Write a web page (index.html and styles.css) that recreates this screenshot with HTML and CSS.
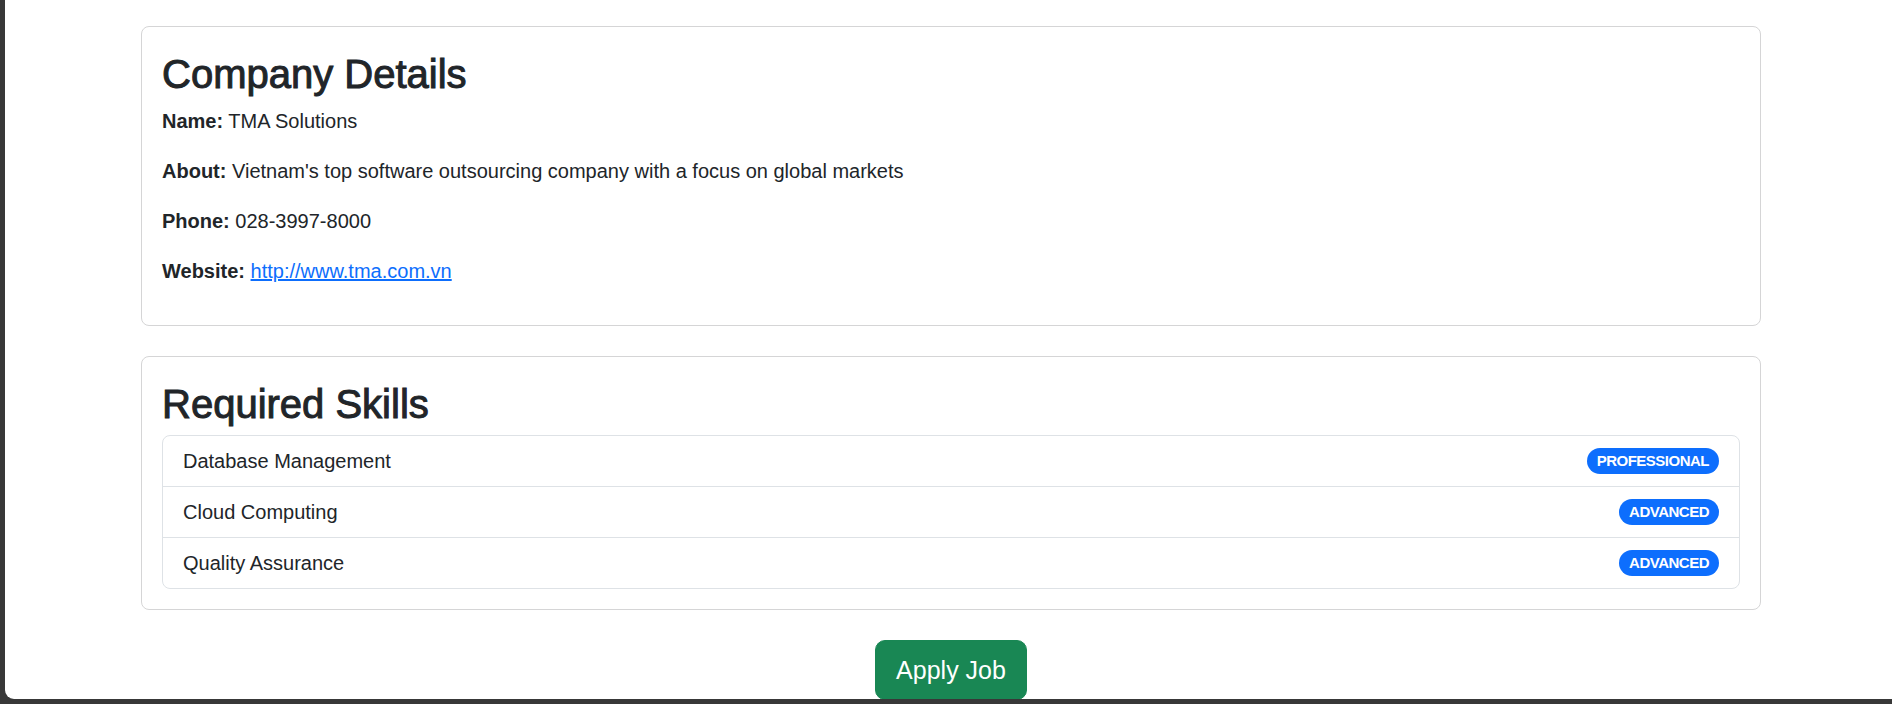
FILE: index.html
```html
<!DOCTYPE html>
<html lang="en">
<head>
<meta charset="utf-8">
<title>Job Details</title>
<link rel="stylesheet" href="styles.css">
</head>
<body>
<div class="window">
  <main class="container">
    <section class="card">
      <div class="card-body">
        <h2 class="card-title">Company Details</h2>
        <p><strong>Name:</strong> TMA Solutions</p>
        <p><strong>About:</strong> Vietnam's top software outsourcing company with a focus on global markets</p>
        <p><strong>Phone:</strong> 028-3997-8000</p>
        <p><strong>Website:</strong> <a href="#">http://www.tma.com.vn</a></p>
      </div>
    </section>
    <section class="card">
      <div class="card-body">
        <h2 class="card-title">Required Skills</h2>
        <ul class="list-group">
          <li class="list-item"><span>Database Management</span><span class="badge">Professional</span></li>
          <li class="list-item"><span>Cloud Computing</span><span class="badge">Advanced</span></li>
          <li class="list-item"><span>Quality Assurance</span><span class="badge">Advanced</span></li>
        </ul>
      </div>
    </section>
    <div class="actions">
      <button class="btn-apply" type="button">Apply Job</button>
    </div>
  </main>
</div>
</body>
</html>
```

FILE: styles.css
```css
* { box-sizing: border-box; }

html, body {
  margin: 0;
  padding: 0;
  height: 704px;
  overflow: hidden;
}

body {
  background: #383838;
  font-family: "Liberation Sans", Arial, sans-serif;
  font-size: 20px;
  line-height: 1.5;
  color: #212529;
}

.window {
  margin-left: 5px;
  height: 699px;
  background: #ffffff;
  border-bottom-left-radius: 9px;
  overflow: hidden;
  padding: 26px 0 0 136px;
}

.container {
  width: 1620px;
}

.card {
  border: 1px solid #d5d5d6;
  border-radius: 8px;
  background: #fff;
  margin-bottom: 30px;
}

.card-body {
  padding: 20px;
}

.card-title {
  margin: 0 0 7px;
  padding-top: 3px;
  font-size: 40px;
  line-height: 48px;
  font-weight: 500;
  -webkit-text-stroke: 1px #212529;
}

.card-body p {
  margin: 0 0 19px;
  padding-top: 1px;
}

.card-body strong {
  font-weight: 700;
}

.card-body a {
  color: #0d6efd;
  text-decoration: underline;
}

.list-group {
  list-style: none;
  margin: 0;
  padding: 0;
  border: 1px solid #dee2e6;
  border-radius: 8px;
}

.list-item {
  display: flex;
  justify-content: space-between;
  align-items: center;
  padding: 10px 20px;
}

.list-item + .list-item {
  border-top: 1px solid #dee2e6;
}

.badge {
  background: #0d6efd;
  color: #fff;
  border-radius: 999px;
  font-size: 15px;
  font-weight: 700;
  line-height: 1;
  padding: 5px 10px 5.5px;
  text-transform: uppercase;
  letter-spacing: -0.5px;
}

.actions {
  display: flex;
  justify-content: center;
}

.btn-apply {
  font-family: "Liberation Sans", Arial, sans-serif;
  font-size: 25px;
  line-height: 37.5px;
  padding: 11px 20px 9px;
  color: #fff;
  background: #198754;
  border: 1px solid #198754;
  border-radius: 10px;
  cursor: pointer;
}
```
